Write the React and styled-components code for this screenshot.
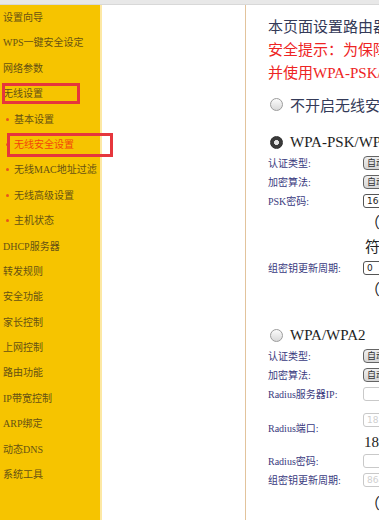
import React from 'react';
import styled, { createGlobalStyle } from 'styled-components';

const GlobalStyle = createGlobalStyle`
  html, body {
    margin: 0;
    padding: 0;
    overflow: hidden;
    background: #fff;
  }
  body {
    font-family: 'Liberation Serif', 'Noto Sans CJK SC', serif;
  }
`;

const Page = styled.div`
  width: 379px;
  height: 520px;
  display: flex;
  flex-direction: column;
  overflow: hidden;
`;

const TopBar = styled.div`
  height: 5px;
  flex: 0 0 5px;
  box-sizing: border-box;
  background: #e8e8e8;
  border-bottom: 1px solid #d8d8d8;
`;

const Main = styled.div`
  flex: 1;
  display: flex;
  min-height: 0;
`;

const Sidebar = styled.nav`
  width: 100px;
  flex: 0 0 100px;
  background: #f6c400;
  border-right: 2px solid #fde8a4;
  position: relative;
  z-index: 1;
`;

const MenuItem = styled.div`
  position: relative;
  height: 25.4px;
  line-height: 25.4px;
  padding-left: ${(p) => (p.$sub ? '14px' : '3px')};
  font-size: 10px;
  white-space: nowrap;
  color: ${(p) => (p.$active ? '#f2460c' : '#665214')};
`;

const Bullet = styled.span`
  position: absolute;
  left: 6px;
  top: 11px;
  width: 3px;
  height: 3px;
  border-radius: 50%;
  background: #e8561c;
`;

/* red annotation frame drawn over the menu */
const Mark = styled.span`
  position: absolute;
  left: ${(p) => p.$l}px;
  width: ${(p) => p.$w}px;
  top: ${(p) => p.$t}px;
  bottom: ${(p) => p.$b}px;
  box-sizing: border-box;
  border: 3px solid #e6363c;
  pointer-events: none;
`;

const Gap = styled.div`
  flex: 0 0 143px;
  background: #fff;
`;

const Panel = styled.section`
  flex: 1;
  min-width: 0;
  border-left: 1px solid #e2c39c;
  padding: 11px 0 0 22px;
  overflow: hidden;
  white-space: nowrap;
`;

const IntroLine = styled.div`
  font-size: 15px;
  line-height: 23px;
  color: ${(p) => (p.$warn ? '#ee2424' : '#343a58')};
`;

const OptionRow = styled.div`
  display: flex;
  align-items: center;
  gap: 7px;
  height: 22px;
  margin-top: ${(p) => p.$mt}px;
  padding-left: 2px;
  font-size: 15px;
  color: ${(p) => (p.$title ? '#1e1e1e' : '#343a58')};
`;

const Radio = styled.span`
  flex: 0 0 13px;
  width: 13px;
  height: 13px;
  box-sizing: border-box;
  border-radius: 50%;
  border: 1px solid ${(p) => (p.$checked ? '#2e2e2e' : '#9c9c9c')};
  background: ${(p) =>
    p.$checked
      ? 'radial-gradient(circle, #e4e4e4 0 2.2px, #3a3a3a 2.8px)'
      : 'linear-gradient(#fbfbfb, #d9d9d9)'};
`;

const FieldRow = styled.div`
  display: grid;
  grid-template-columns: 95px 1fr;
  align-items: ${(p) => (p.$tall ? 'start' : 'center')};
  height: ${(p) => p.$h || 19}px;
`;

const Label = styled.div`
  font-size: 10px;
  color: #3a3a7e;
  align-self: center;
`;

const Value = styled.div`
  display: flex;
  flex-direction: column;
  padding-top: ${(p) => p.$pt || 0}px;
`;

const Select = styled.div`
  width: 70px;
  height: 14px;
  box-sizing: border-box;
  border: 1.5px solid #646464;
  border-radius: 4px;
  background: linear-gradient(#f0f0f0, #d6d6d6);
  font-family: 'Noto Sans CJK SC', sans-serif;
  font-size: 9px;
  line-height: 11px;
  padding-left: 3px;
  color: #333;
`;

const TextBox = styled.div`
  width: 90px;
  height: 14px;
  box-sizing: border-box;
  border: ${(p) => (p.$dim ? '1px solid #c9c9c9' : '1.5px solid #555')};
  border-radius: 3px;
  background: #fff;
  font-family: 'DejaVu Sans', sans-serif;
  font-size: 9px;
  line-height: 12px;
  padding-left: 3px;
  color: ${(p) => (p.$dim ? '#cfcfcf' : '#222')};
`;

const Note = styled.div`
  font-family: 'Noto Sans CJK SC', sans-serif;
  font-size: 15px;
  line-height: 24px;
  padding-left: 97px;
  margin-top: ${(p) => p.$mt || 0}px;
  color: #222;
`;

const PortText = styled.div`
  font-size: 15px;
  line-height: 20px;
  margin-top: 5px;
  padding-left: 1px;
  color: #222;
`;

const menu = [
  { label: '设置向导' },
  { label: 'WPS一键安全设定' },
  { label: '网络参数' },
  { label: '无线设置', mark: { l: 2, w: 78, t: 2, b: 3 } },
  { label: '基本设置', sub: true },
  { label: '无线安全设置', sub: true, active: true, mark: { l: 7, w: 106, t: 1, b: 0 } },
  { label: '无线MAC地址过滤', sub: true },
  { label: '无线高级设置', sub: true },
  { label: '主机状态', sub: true },
  { label: 'DHCP服务器' },
  { label: '转发规则' },
  { label: '安全功能' },
  { label: '家长控制' },
  { label: '上网控制' },
  { label: '路由功能' },
  { label: 'IP带宽控制' },
  { label: 'ARP绑定' },
  { label: '动态DNS' },
  { label: '系统工具' },
];

export default function App() {
  return (
    <>
      <GlobalStyle />
      <Page>
        <TopBar />
        <Main>
          <Sidebar>
            {menu.map((item) => (
              <MenuItem key={item.label} $sub={item.sub} $active={item.active}>
                {item.sub && <Bullet />}
                {item.label}
                {item.mark && (
                  <Mark $l={item.mark.l} $w={item.mark.w} $t={item.mark.t} $b={item.mark.b} />
                )}
              </MenuItem>
            ))}
          </Sidebar>
          <Gap />
          <Panel>
            <IntroLine>本页面设置路由器无线网络的安全认证选项。</IntroLine>
            <IntroLine $warn>安全提示：为保障网络安全，强烈推荐开启安全设置，</IntroLine>
            <IntroLine $warn>并使用WPA-PSK/WPA2-PSK AES加密方法。</IntroLine>

            <OptionRow $mt={8}>
              <Radio />
              不开启无线安全
            </OptionRow>

            <OptionRow $mt={16} $title>
              <Radio $checked />
              WPA-PSK/WPA2-PSK
            </OptionRow>
            <FieldRow>
              <Label>认证类型:</Label>
              <Value><Select>自动</Select></Value>
            </FieldRow>
            <FieldRow>
              <Label>加密算法:</Label>
              <Value><Select>自动</Select></Value>
            </FieldRow>
            <FieldRow>
              <Label>PSK密码:</Label>
              <Value><TextBox>1664298375</TextBox></Value>
            </FieldRow>
            <Note>（8-63个ASCII码字符或8-64个十六进制字</Note>
            <Note>符）</Note>
            <FieldRow>
              <Label>组密钥更新周期:</Label>
              <Value><TextBox>0</TextBox></Value>
            </FieldRow>
            <Note>（单位为秒，最小值为30，不更新则为0）</Note>

            <OptionRow $mt={23} $title>
              <Radio />
              WPA/WPA2
            </OptionRow>
            <FieldRow>
              <Label>认证类型:</Label>
              <Value><Select>自动</Select></Value>
            </FieldRow>
            <FieldRow>
              <Label>加密算法:</Label>
              <Value><Select>自动</Select></Value>
            </FieldRow>
            <FieldRow>
              <Label>Radius服务器IP:</Label>
              <Value><TextBox $dim /></Value>
            </FieldRow>
            <FieldRow $h={48} $tall>
              <Label>Radius端口:</Label>
              <Value $pt={10}>
                <TextBox $dim>1812</TextBox>
                <PortText>1812（1-65535，0表示默认端口）</PortText>
              </Value>
            </FieldRow>
            <FieldRow>
              <Label>Radius密码:</Label>
              <Value><TextBox $dim /></Value>
            </FieldRow>
            <FieldRow>
              <Label>组密钥更新周期:</Label>
              <Value><TextBox $dim>86400</TextBox></Value>
            </FieldRow>
            <Note $mt={2}>（单位为秒，最小值为30，不更新则为0）</Note>
          </Panel>
        </Main>
      </Page>
    </>
  );
}
